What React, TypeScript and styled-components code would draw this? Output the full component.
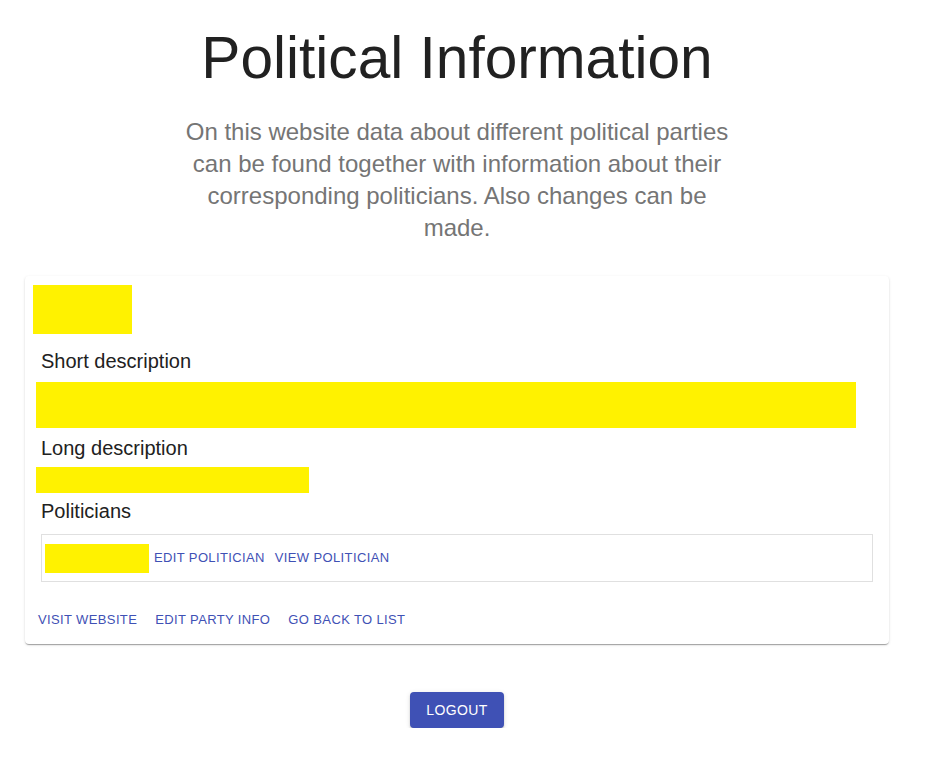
import React from "react";
import styled, { createGlobalStyle } from "styled-components";

const GlobalStyle = createGlobalStyle`
  html, body {
    margin: 0;
    padding: 0;
    background: #ffffff;
    font-family: "Liberation Sans", Arial, sans-serif;
  }
`;

const Page = styled.main`
  width: 864px;
  padding-left: 25px;
  padding-top: 22px;
  display: flex;
  flex-direction: column;
  align-items: center;
`;

const Title = styled.h1`
  margin: 0;
  font-size: 58.6px;
  line-height: 72px;
  font-weight: 400;
  color: #212121;
  text-align: center;
`;

const Subtitle = styled.p`
  margin: 22px 0 0;
  max-width: 560px;
  font-size: 24px;
  line-height: 32px;
  color: #757575;
  text-align: center;
`;

const Card = styled.section`
  align-self: stretch;
  margin-top: 32px;
  background: #fff;
  border-radius: 4px;
  box-shadow: 0px 2px 1px -1px rgba(0, 0, 0, 0.2),
    0px 1px 1px 0px rgba(0, 0, 0, 0.14), 0px 1px 3px 0px rgba(0, 0, 0, 0.12);
  display: flex;
  flex-direction: column;
  align-items: flex-start;
`;

const Content = styled.div`
  align-self: stretch;
  padding: 9px 16px 15px 8px;
  display: flex;
  flex-direction: column;
  align-items: flex-start;
`;

const Redacted = styled.div<{ $w: number; $h: number; $mt?: number; $ml?: number }>`
  width: ${(p) => p.$w}px;
  height: ${(p) => p.$h}px;
  margin-top: ${(p) => p.$mt ?? 0}px;
  margin-left: ${(p) => p.$ml ?? 0}px;
  background: #fff200;
  flex-shrink: 0;
`;

const Label = styled.h3<{ $mt: number }>`
  margin: ${(p) => p.$mt}px 0 0 8px;
  font-size: 20px;
  line-height: 24px;
  font-weight: 400;
  color: #212121;
`;

const PoliticianRow = styled.div`
  align-self: stretch;
  margin: 11px 0 0 8px;
  height: 48px;
  border: 1px solid #e0e0e0;
  display: flex;
  align-items: center;
  padding-left: 3px;
  box-sizing: border-box;
`;

const TextButton = styled.button`
  border: none;
  background: transparent;
  padding: 4px 5px;
  margin: 0;
  font-family: "Liberation Sans", Arial, sans-serif;
  font-size: 13px;
  line-height: 22.75px;
  letter-spacing: 0.02857em;
  text-transform: uppercase;
  color: #3f51b5;
  border-radius: 4px;
  cursor: pointer;
`;

const Actions = styled.div`
  display: flex;
  align-items: center;
  gap: 8px;
  padding: 8px;
`;

const LogoutButton = styled.button`
  margin-top: 48px;
  border: none;
  background: #3f51b5;
  color: #fff;
  padding: 6px 16px;
  font-family: "Liberation Sans", Arial, sans-serif;
  font-size: 14px;
  line-height: 24.5px;
  letter-spacing: 0.02857em;
  text-transform: uppercase;
  border-radius: 4px;
  box-shadow: 0px 3px 1px -2px rgba(0, 0, 0, 0.2),
    0px 2px 2px 0px rgba(0, 0, 0, 0.14), 0px 1px 5px 0px rgba(0, 0, 0, 0.12);
  cursor: pointer;
`;

export default function App() {
  return (
    <>
      <GlobalStyle />
      <Page>
        <Title>Political Information</Title>
        <Subtitle>
          On this website data about different political parties can be found
          together with information about their corresponding politicians. Also
          changes can be made.
        </Subtitle>
        <Card>
          <Content>
            <Redacted $w={99} $h={49} />
            <Label $mt={15}>Short description</Label>
            <Redacted $w={820} $h={46} $mt={9} $ml={3} />
            <Label $mt={8}>Long description</Label>
            <Redacted $w={273} $h={26} $mt={7} $ml={3} />
            <Label $mt={6}>Politicians</Label>
            <PoliticianRow>
              <Redacted $w={104} $h={29} />
              <TextButton>Edit politician</TextButton>
              <TextButton>View politician</TextButton>
            </PoliticianRow>
          </Content>
          <Actions>
            <TextButton>Visit website</TextButton>
            <TextButton>Edit party info</TextButton>
            <TextButton>Go back to list</TextButton>
          </Actions>
        </Card>
        <LogoutButton>Logout</LogoutButton>
      </Page>
    </>
  );
}
